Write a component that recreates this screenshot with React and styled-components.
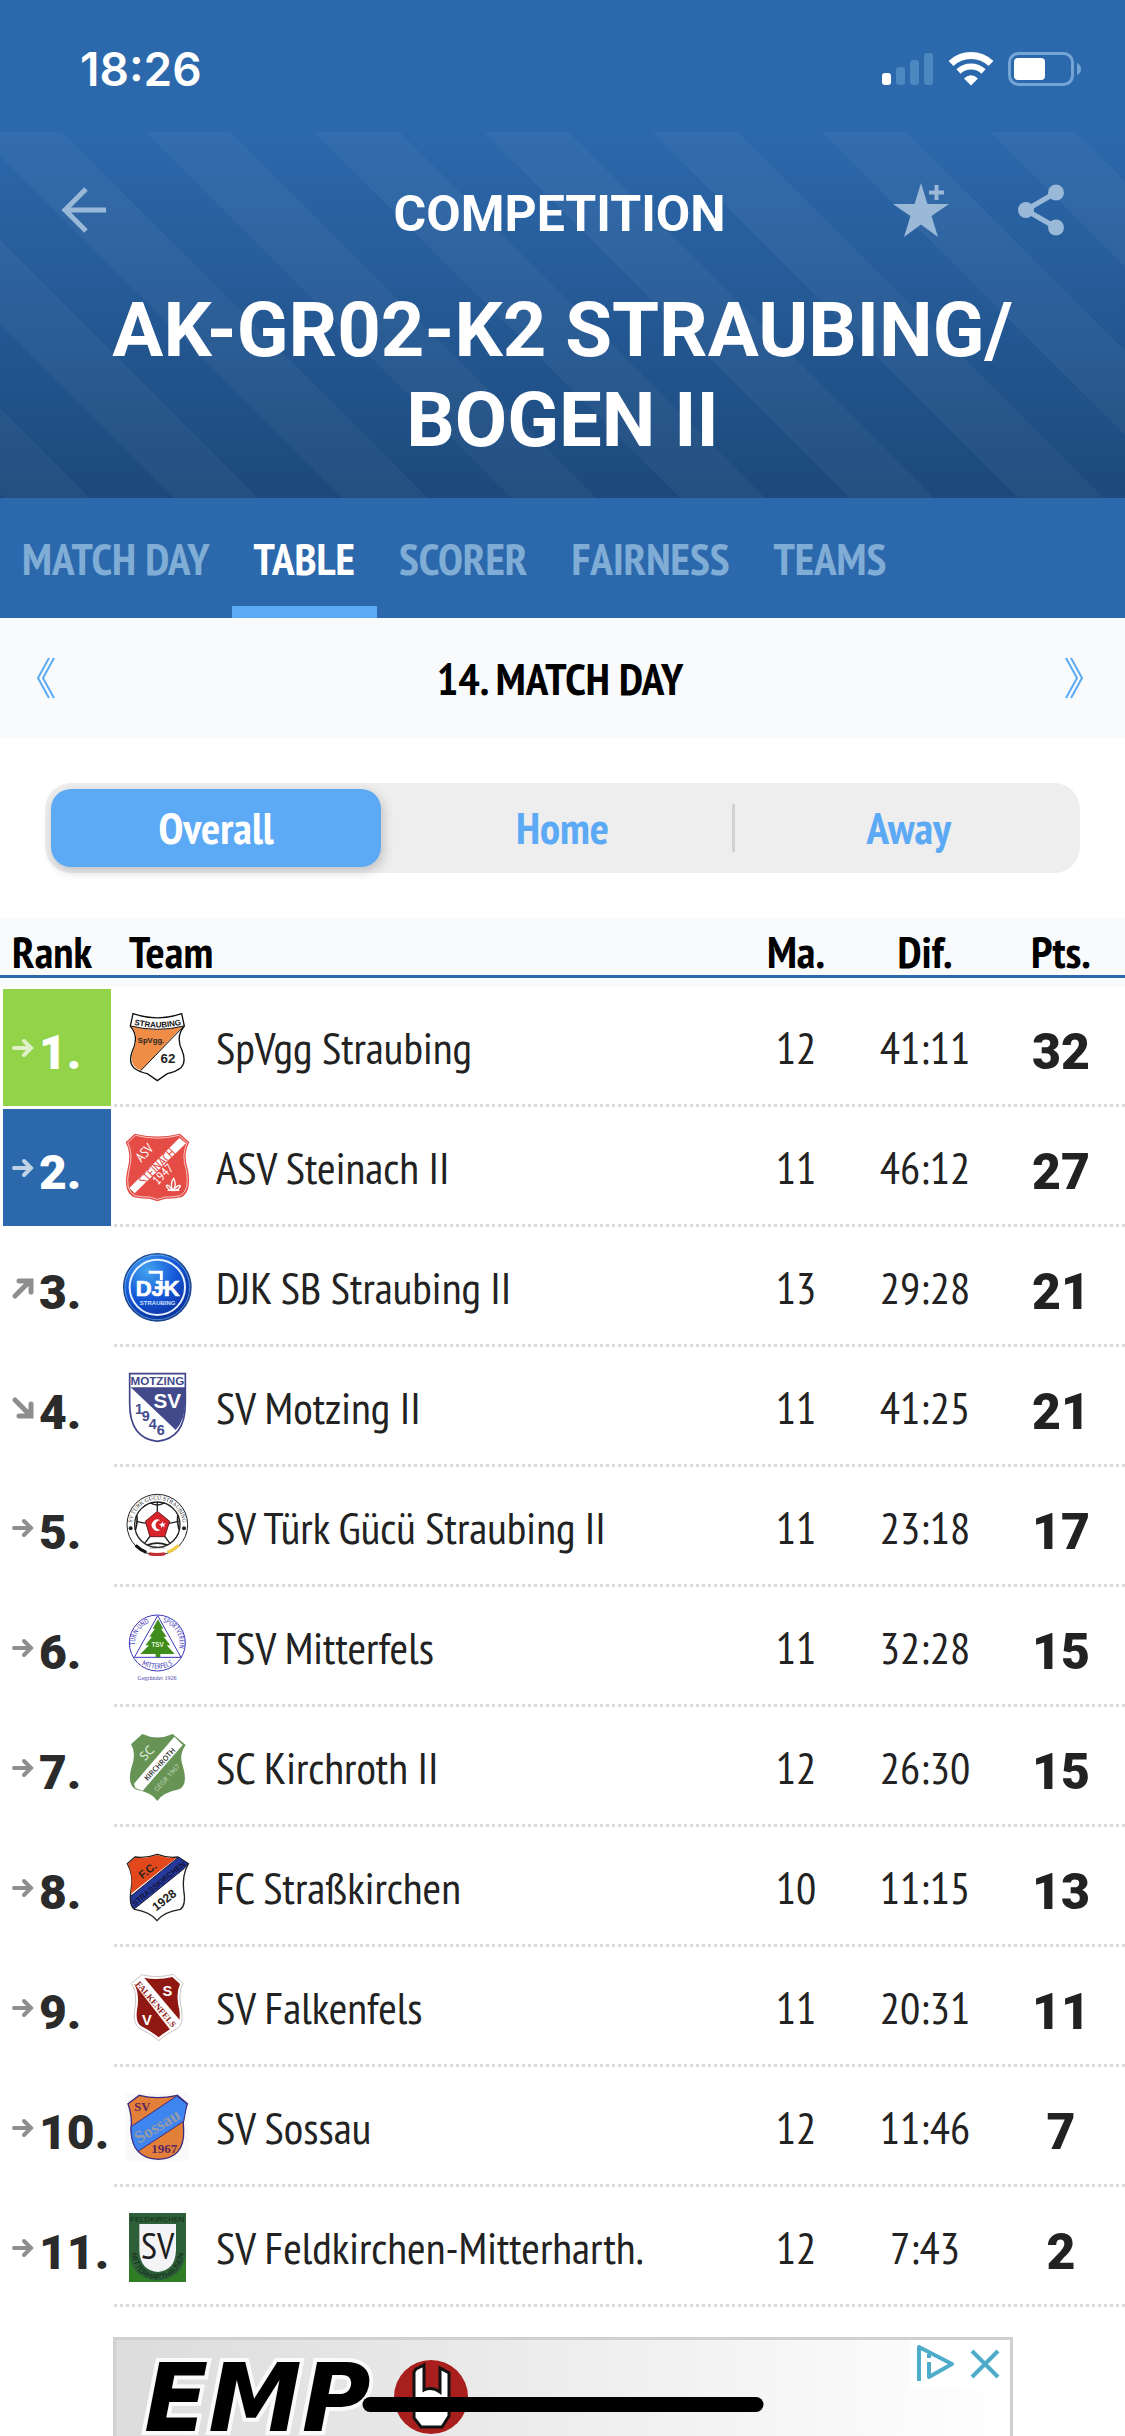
import React, { useState } from 'react';
import styled, { createGlobalStyle, css } from 'styled-components';

const colors = {
  brand: '#2c68ac',
  accent: '#5ca9f5',
  panel: '#f9fafc',
  ink: '#222222',
};

const textFont = `"PT Sans Narrow", "Liberation Sans Narrow", "Roboto Condensed", "Open Sans Condensed", "Noto Sans Condensed", Roboto, sans-serif`;
const displayFont = `Roboto, "Liberation Sans", sans-serif`;

const GlobalStyle = createGlobalStyle`
  *, *::before, *::after { box-sizing: border-box; }
  body { margin: 0; background: #ffffff; color: ${colors.ink}; font-family: ${textFont}; }
  button { border: 0; padding: 0; background: none; font-family: inherit; cursor: pointer; }
  svg { display: block; }
`;

const Page = styled.div`
  display: flex;
  flex-direction: column;
  min-height: 100vh;
`;

const StatusBar = styled.div`
  display: flex;
  align-items: center;
  justify-content: space-between;
  height: 132px;
  padding: 6px 43px 0 80px;
  background: ${colors.brand};
  color: #ffffff;
`;

const Clock = styled.time`
  font: 600 46px/48px Inter, sans-serif;
`;

const StatusIcons = styled.div`
  display: flex;
  align-items: center;
  gap: 14px;
`;

const Hero = styled.header`
  padding-bottom: 33px;
  background:
    linear-gradient(45deg, rgba(255, 255, 255, 0.035) 25%, transparent 25% 50%, rgba(255, 255, 255, 0.035) 50% 75%, transparent 75%) 5px 100% / 169px 169px,
    linear-gradient(#2c68ac, #1c497b);
  color: #ffffff;
`;

const Toolbar = styled.div`
  display: grid;
  grid-template-columns: 1fr auto 1fr;
  align-items: center;
  height: 153px;
  padding: 2px 52px 0;
`;

const ToolbarTitle = styled.p`
  margin: 0;
  padding: 8px 6px 0 0;
  font: 700 50px/56px ${displayFont};
`;

const ToolbarActions = styled.div`
  display: flex;
  justify-content: flex-end;
  gap: 56px;
`;

const IconButton = styled.button`
  display: flex;
  align-items: center;
  justify-content: center;
  width: 64px;
  height: 64px;
  color: #9ab9d8;
`;

const Title = styled.h1`
  margin: 0 auto;
  max-width: 960px;
  font: 700 76px/90px ${displayFont};
  text-align: center;
`;

const Tabs = styled.nav`
  display: flex;
  height: 120px;
  background: ${colors.brand};
`;

const Tab = styled.button`
  padding: 12px 22px 0;
  border-bottom: 12px solid ${(p) => (p.$active ? colors.accent : 'transparent')};
  color: ${(p) => (p.$active ? '#ffffff' : '#80add6')};
  font-weight: 700;
  font-size: 45px;
`;

const DayBar = styled.div`
  display: flex;
  align-items: center;
  justify-content: space-between;
  height: 120px;
  padding: 0 23px 0 18px;
  background: ${colors.panel};
`;

const DayButton = styled(IconButton)`
  width: 56px;
  color: ${colors.accent};
`;

const DayTitle = styled.h2`
  margin: 0;
  color: #000000;
  font-weight: 700;
  font-size: 45px;
`;

const Segments = styled.div`
  display: grid;
  grid-template-columns: repeat(3, 1fr);
  gap: 16px;
  height: 90px;
  margin: 45px;
  padding: 6px;
  border-radius: 26px;
  background: #eeeeee;
`;

const Segment = styled.button`
  position: relative;
  padding-bottom: 2px;
  border-radius: 20px;
  color: ${colors.accent};
  font-weight: 700;
  font-size: 45px;
  ${(p) =>
    p.$active &&
    css`
      background: ${colors.accent};
      color: #ffffff;
      box-shadow: 2px 4px 12px rgba(0, 0, 0, 0.2);
    `}
  ${(p) =>
    p.$divided &&
    css`
      &::before {
        content: '';
        position: absolute;
        left: -12px;
        top: 15px;
        bottom: 15px;
        width: 3px;
        background: #d2d2d4;
      }
    `}
`;

const Standings = styled.table`
  width: 100%;
  table-layout: fixed;
  border-spacing: 0;
`;

const HeadCell = styled.th`
  height: 69px;
  width: ${(p) => p.$width || 'auto'};
  padding: 0 0 3px ${(p) => p.$inset || '0'};
  border-bottom: 9px solid ${colors.panel};
  box-shadow: inset 0 -3px ${colors.brand};
  background: ${colors.panel};
  color: #000000;
  font-weight: 700;
  font-size: 45px;
  line-height: 48px;
  text-align: ${(p) => p.$align || 'center'};
  vertical-align: bottom;
`;

const Row = styled.tr`
  height: 120px;
  background: repeating-linear-gradient(90deg, #dadada 0 3px, transparent 3px 6px) 114px 100% / 100% 3px no-repeat;
`;

const Cell = styled.td`
  padding: 0;
  font-size: 45px;
  text-align: center;
`;

const RankBox = styled.div`
  display: flex;
  align-items: center;
  gap: 4px;
  height: 117px;
  margin: 1px 3px 0;
  padding-left: 8px;
  background: ${(p) => p.$fill || 'transparent'};
  color: ${(p) => (p.$fill ? '#ffffff' : '#2b2b2b')};
`;

const TrendIcon = styled.svg`
  flex: none;
  opacity: ${(p) => (p.$light ? 0.7 : 0.55)};
`;

const RankNumber = styled.span`
  padding-top: 10px;
  font: 900 48px/56px ${displayFont};
`;

const Team = styled.div`
  display: flex;
  align-items: center;
  gap: 23px;
  padding-left: 7px;
  text-align: left;
  white-space: nowrap;
`;

const Points = styled(Cell)`
  padding-top: 10px;
  font: 900 50px/56px ${displayFont};
`;

const Ad = styled.aside`
  flex: 1;
  min-height: 99px;
  margin: 30px 112px 0 113px;
  border: 3px solid #d0d0d0;
  border-bottom: 0;
  background: linear-gradient(90deg, #dcdcdc, #ffffff);
`;

const AdRow = styled.div`
  display: flex;
  justify-content: space-between;
  align-items: flex-start;
`;

const AdControls = styled.div`
  display: flex;
  align-items: center;
  background: #ffffff;
`;

const AdButton = styled.button`
  display: flex;
  align-items: center;
  justify-content: center;
  width: 50px;
  height: 48px;
`;

const HomeIndicator = styled.div`
  position: fixed;
  bottom: 24px;
  left: 50%;
  width: 401px;
  height: 15px;
  border-radius: 8px;
  background: #000000;
  transform: translateX(-50%);
`;

const trendPaths = {
  same: 'M3 12H20M13 5L20 12L13 19',
  up: 'M4 20L19 5M8 5H20V16',
  down: 'M4 4L19 19M20 8V20H8',
};

function Trend({ kind, light }) {
  return (
    <TrendIcon $light={light} width="24" height="24" viewBox="0 0 24 24" fill="none" stroke={light ? '#fff' : '#333'} strokeWidth={kind === 'same' ? 4 : 5} strokeLinecap="round" role="img" aria-label={kind}>
      <path d={trendPaths[kind]} />
    </TrendIcon>
  );
}

const bold = 'Liberation Sans, sans-serif';

const crests = {
  spvgg: (
    <>
      <path d="M69 41Q142 66 215 41L223 78Q196 110 216 151Q230 185 213 203Q196 216 172 221L142 242L112 221Q88 216 71 203Q54 185 68 151Q88 110 61 78Z" fill="#fff" stroke="#111" strokeWidth="4" />
      <path d="M64 79Q142 98 218 79L94 211Q55 200 69 153Q90 112 64 79Z" fill="#ef8c45" />
      <path d="M62 78Q142 98 222 78M220 80L92 212" fill="none" stroke="#111" strokeWidth="3" />
      <path id="arc-spvgg" d="M68 73Q142 92 218 73" fill="none" />
      <text fontFamily={bold} fontWeight="700" fontSize="24" fill="#111" textAnchor="middle"><textPath href="#arc-spvgg" startOffset="50%">STRAUBING</textPath></text>
      <text x="123" y="130" fontFamily={bold} fontWeight="700" fontSize="23" fill="#222" textAnchor="middle">SpVgg.</text>
      <text x="174" y="190" fontFamily={bold} fontWeight="700" fontSize="40" fill="#222" textAnchor="middle">62</text>
    </>
  ),
  steinach: (
    <>
      <path d="M74 41Q142 58 210 41L238 67Q218 100 234 150Q246 215 214 232Q190 237 166 236L142 244L118 236Q94 237 72 232Q38 215 52 150Q66 100 47 67Z" fill="#e54c45" />
      <path d="M77 46Q142 63 207 46L232 68Q213 102 229 151Q240 211 211 227Q188 232 165 231L142 238L119 231Q96 232 75 227Q43 211 57 151Q71 102 53 68Z" fill="none" stroke="#fff" strokeWidth="2" />
      <path d="M58 204L208 54L228 70L74 220Z" fill="#fff" />
      <g fontFamily={textFont} fontWeight="400" textAnchor="middle">
        <text transform="translate(113 108) rotate(-46)" fontSize="41" fill="#fff">ASV</text>
        <text transform="translate(151 149) rotate(-45)" fontSize="39" fill="#e54c45">STEINACH</text>
        <text transform="translate(168 172) rotate(-45)" fontSize="39" fill="#fff">1947</text>
      </g>
      <path d="M188 212Q179 190 191 175Q202 195 188 212Q205 192 211 198Q207 211 188 212Q174 189 169 198Q175 210 188 212M173 211H208" fill="none" stroke="#fff" strokeWidth="4" />
    </>
  ),
  djk: (
    <>
      <defs>
        <radialGradient id="djk-fill" cx="0.35" cy="0.25" r="0.85">
          <stop offset="0" stopColor="#43a4ef" />
          <stop offset="0.5" stopColor="#1557d8" />
          <stop offset="1" stopColor="#07288f" />
        </radialGradient>
      </defs>
      <circle cx="142" cy="142" r="101" fill="url(#djk-fill)" stroke="#1c458c" strokeWidth="4" />
      <circle cx="142" cy="142" r="97" fill="none" stroke="#7fbbe6" strokeWidth="2" />
      <circle cx="142" cy="142" r="83" fill="none" stroke="#e4effc" strokeWidth="6" />
      <text x="143" y="168" fontFamily={bold} fontWeight="700" fontSize="66" fill="#fff" stroke="#fff" strokeWidth="2" textAnchor="middle">DJK</text>
      <path d="M116 97H154V120M134 143H175" fill="none" stroke="#fff" strokeWidth="9" />
      <text x="143" y="194" fontFamily={bold} fontWeight="700" fontSize="18" fill="#cfe2fb" textAnchor="middle">STRAUBING</text>
    </>
  ),
  motzing: (
    <>
      <path d="M59 41H226V130Q226 236 142 244Q59 236 59 130Z" fill="#fff" stroke="#3f4589" strokeWidth="5" />
      <path d="M60 82H225V130Q225 180 197 210L62 82Z" fill="#424a8c" />
      <g fontFamily={bold} fontWeight="700" fill="#424a8c" textAnchor="middle">
        <text x="142" y="76" fontSize="35">MOTZING</text>
        <text x="172" y="144" fontSize="62" fill="#fff">SV</text>
        <text x="87" y="163" fontSize="43">1</text>
        <text x="107" y="184" fontSize="43">9</text>
        <text x="128" y="206" fontSize="43">4</text>
        <text x="152" y="226" fontSize="43">6</text>
      </g>
    </>
  ),
  turk: (
    <>
      <circle cx="142" cy="134" r="91" fill="#fff" stroke="#222" strokeWidth="3" />
      <circle cx="142" cy="134" r="68" fill="none" stroke="#222" strokeWidth="4" />
      <path d="M142 66V94M78 124L107 130M206 124L177 130M104 190L123 165M180 190L161 165" stroke="#222" strokeWidth="4" />
      <path d="M120 68Q142 82 164 68M80 105Q84 125 76 150M204 105Q200 125 208 150M112 195Q142 184 172 195" fill="none" stroke="#222" strokeWidth="5" />
      <path d="M142 94L179 124L164 170H120L106 124Z" fill="#d8232a" stroke="#6d1a1d" strokeWidth="3" />
      <path d="M151 121A17 17 0 1 0 151 150A14 14 0 1 1 151 121Z" fill="#fff" />
      <path d="M157 124L160 131L167 130L162 136L165 142L158 139L153 144L153 137L147 133L154 131Z" fill="#fff" />
      <path id="arc-turk" d="M68 152A76 76 0 1 1 216 152" fill="none" />
      <text fontFamily="Liberation Serif, serif" fontSize="17" fill="#222" textAnchor="middle"><textPath href="#arc-turk" startOffset="50%">SV TÜRK GÜCÜ STRAUBING</textPath></text>
      <text x="142" y="206" fontFamily="Liberation Serif, serif" fontSize="13" fill="#444" textAnchor="middle">1981 e.V.</text>
      <g fill="#222">
        <circle cx="62" cy="145" r="6" />
        <circle cx="222" cy="145" r="6" />
      </g>
      <path d="M77 196Q91 210 109 217" fill="none" stroke="#111" strokeWidth="9" />
      <path d="M117 221Q141 226 165 221" fill="none" stroke="#c22f33" strokeWidth="9" />
      <path d="M172 217Q191 210 206 196" fill="none" stroke="#f0cd45" strokeWidth="9" />
    </>
  ),
  mitterfels: (
    <>
      <circle cx="142" cy="129" r="84" fill="#fff" stroke="#3b36b8" strokeWidth="3" />
      <path d="M143 47L213 172H73Z" fill="none" stroke="#3b36b8" strokeWidth="3" />
      <path d="M144 58L160 86H153L170 110H161L181 136H170L194 162H151V172H137V162H91L117 136H106L126 110H118L135 86H128Z" fill="#3f8c1c" />
      <text x="143" y="142" fontFamily={bold} fontWeight="700" fontSize="19" fill="#e8f5df" textAnchor="middle">TSV</text>
      <path id="arc-mit-l" d="M78 150A66 66 0 0 1 132 65" fill="none" />
      <path id="arc-mit-r" d="M153 65A66 66 0 0 1 206 150" fill="none" />
      <path id="arc-mit-b" d="M88 190Q142 222 196 190" fill="none" />
      <g fontFamily={textFont} fontWeight="400" fill="#3b36b8" textAnchor="middle">
        <text fontSize="22"><textPath href="#arc-mit-l" startOffset="50%">TURN-UND</textPath></text>
        <text fontSize="21"><textPath href="#arc-mit-r" startOffset="50%">SPORTVEREIN</textPath></text>
        <text fontSize="22"><textPath href="#arc-mit-b" startOffset="50%">MITTERFELS</textPath></text>
      </g>
      <text x="141" y="239" fontFamily="Liberation Serif, serif" fontSize="18" fill="#4a48a8" textAnchor="middle">Gegründet 1926</text>
    </>
  ),
  kirchroth: (
    <>
      <path d="M97 42Q142 63 188 42L227 75Q205 105 219 140Q235 195 207 208Q158 218 142 243Q126 218 76 208Q50 190 65 140Q80 100 63 73Z" fill="#679455" />
      <path d="M72 191L193 50L218 75L98 212L76 204Z" fill="#fff" />
      <g fontFamily="Open Sans, sans-serif" textAnchor="middle">
        <text transform="translate(120 108) rotate(-47)" fontSize="37" fill="#eef5ea">SC</text>
        <text transform="translate(155 138) rotate(-47)" fontSize="22" fontWeight="600" fill="#2a2a2a">KIRCHROTH</text>
        <text transform="translate(176 178) rotate(-47)" fontSize="20" fill="#c9dcc0">GEGR 1967</text>
      </g>
    </>
  ),
  strass: (
    <>
      <path d="M75 51Q110 55 142 43Q174 55 202 51L235 71Q216 105 221 150Q229 196 211 208Q160 216 141 242Q122 216 74 208Q56 196 63 150Q72 105 52 71Z" fill="#fff" stroke="#222" strokeWidth="4" />
      <path d="M75 53Q110 57 142 45Q174 57 200 53L62 162Q72 105 54 71Z" fill="#e2481c" />
      <path d="M63 168L206 51L235 71L222 86L74 206Q58 195 63 168Z" fill="#25399d" stroke="#1b1b2e" strokeWidth="3" />
      <g fontFamily={bold} fontWeight="700" textAnchor="middle" fill="#222">
        <text transform="translate(120 100) rotate(-38)" fontSize="33">F.C.</text>
        <text transform="translate(151 137) rotate(-39)" fontSize="23" fill="#141438">STRASSKIRCHEN</text>
        <text transform="translate(170 190) rotate(-38)" fontSize="36">1928</text>
      </g>
    </>
  ),
  falkenfels: (
    <>
      <path d="M96 44Q142 56 190 43L219 70Q203 100 215 150Q221 192 203 205Q170 220 146 242Q122 220 88 205Q68 192 74 150Q84 100 64 70Z" fill="#fff" stroke="#b5a5a5" strokeWidth="2" />
      <path d="M101 53Q142 62 187 51L210 72Q196 103 208 150Q213 187 198 198Q168 213 146 232Q122 213 93 198Q76 187 81 150Q90 103 73 72Z" fill="#8f1812" />
      <path d="M72 70L100 50L214 186L184 214Z" fill="#fff" />
      <text transform="translate(131 138) rotate(50)" fontFamily="Liberation Serif, serif" fontWeight="700" fontSize="26" fill="#8f1812" textAnchor="middle">FALKENFELS</text>
      <g fontFamily={bold} fontWeight="700" fontSize="44" fill="#fff" textAnchor="middle">
        <text x="172" y="107">S</text>
        <text x="111" y="196">V</text>
      </g>
    </>
  ),
  sossau: (
    <>
      <path d="M45 40H238V242H45Z" fill="#f8f9f8" />
      <path d="M88 46Q142 60 202 46L232 71Q216 110 221 150Q224 236 145 238Q66 236 63 150Q68 110 54 71Z" fill="#e27f39" stroke="#3d2a80" strokeWidth="4" />
      <path d="M63 140L200 48L231 72L221 124L84 214Q62 190 63 140Z" fill="#3f85f0" stroke="#3d2a80" strokeWidth="3" />
      <g fontFamily="Liberation Serif, serif" fontWeight="700" textAnchor="middle">
        <text x="97" y="94" fontSize="38" fill="#5a2560">SV</text>
        <text transform="translate(150 153) rotate(-31)" fontSize="52" fill="#969aa6">Sossau</text>
        <text x="163" y="218" fontSize="39" fill="#5a2560">1967</text>
      </g>
    </>
  ),
  feldkirchen: (
    <>
      <path d="M57 39H228V246H57Z" fill="#2f7d25" />
      <path d="M57 39H228V150Q226 234 142 242Q58 234 57 150Z" fill="#2d5f38" />
      <path d="M88 72H198V150Q196 212 143 216Q90 212 88 150Z" fill="#f4f4f6" />
      <text x="143" y="178" fontFamily={textFont} fontSize="112" fill="#1d1d1d" textAnchor="middle">SV</text>
      <text x="142" y="66" fontFamily={bold} fontSize="23" fill="#142b18" textAnchor="middle">FELDKIRCHEN</text>
      <path id="arc-feld" d="M64 98V150Q70 234 142 238Q214 234 222 150V98" fill="none" />
      <text fontFamily={bold} fontSize="23" fill="#142b18" textAnchor="middle"><textPath href="#arc-feld" startOffset="50%">MITTERHARTHAUSEN</textPath></text>
    </>
  ),
};

const rows = [
  { rank: 1, trend: 'same', fill: '#93d349', crest: 'spvgg', team: 'SpVgg Straubing', played: 12, diff: '41:11', points: 32 },
  { rank: 2, trend: 'same', fill: colors.brand, crest: 'steinach', team: 'ASV Steinach II', played: 11, diff: '46:12', points: 27 },
  { rank: 3, trend: 'up', crest: 'djk', team: 'DJK SB Straubing II', played: 13, diff: '29:28', points: 21 },
  { rank: 4, trend: 'down', crest: 'motzing', team: 'SV Motzing II', played: 11, diff: '41:25', points: 21 },
  { rank: 5, trend: 'same', crest: 'turk', team: 'SV Türk Gücü Straubing II', played: 11, diff: '23:18', points: 17 },
  { rank: 6, trend: 'same', crest: 'mitterfels', team: 'TSV Mitterfels', played: 11, diff: '32:28', points: 15 },
  { rank: 7, trend: 'same', crest: 'kirchroth', team: 'SC Kirchroth II', played: 12, diff: '26:30', points: 15 },
  { rank: 8, trend: 'same', crest: 'strass', team: 'FC Straßkirchen', played: 10, diff: '11:15', points: 13 },
  { rank: 9, trend: 'same', crest: 'falkenfels', team: 'SV Falkenfels', played: 11, diff: '20:31', points: 11 },
  { rank: 10, trend: 'same', crest: 'sossau', team: 'SV Sossau', played: 12, diff: '11:46', points: 7 },
  { rank: 11, trend: 'same', crest: 'feldkirchen', team: 'SV Feldkirchen-Mitterharth.', played: 12, diff: '7:43', points: 2 },
];

const tabNames = ['MATCH DAY', 'TABLE', 'SCORER', 'FAIRNESS', 'TEAMS'];
const segmentNames = ['Overall', 'Home', 'Away'];

export default function App() {
  const [tab, setTab] = useState('TABLE');
  const [segment, setSegment] = useState('Overall');

  return (
    <Page>
      <GlobalStyle />
      <StatusBar>
        <Clock>18:26</Clock>
        <StatusIcons>
          <svg width="52" height="34" viewBox="0 0 52 34" aria-hidden="true">
            <rect x="0" y="21" width="9" height="12" rx="3" fill="#fff" />
            <g fill="#4b88bf">
              <rect x="14" y="15" width="9" height="18" rx="3" />
              <rect x="28" y="8" width="9" height="25" rx="3" />
              <rect x="42" y="1" width="9" height="32" rx="3" />
            </g>
          </svg>
          <svg width="46" height="34" viewBox="0 0 46 34" fill="none" stroke="#fff" aria-hidden="true">
            <path d="M3 11.500A29 29 0 0 1 43 11.500" strokeWidth="7" />
            <path d="M10.500 19.500A18 18 0 0 1 35.500 19.500" strokeWidth="6" />
            <path d="M16 26.500Q23 20 30 26.500L23 33.500Z" fill="#fff" stroke="none" />
          </svg>
          <svg width="74" height="34" viewBox="0 0 74 34" aria-hidden="true">
            <rect x="1.500" y="1.500" width="63" height="31" rx="9" fill="none" stroke="#74a5d5" strokeWidth="3" />
            <rect x="6" y="6" width="31" height="22" rx="4" fill="#fff" />
            <path d="M69 11Q73 13 73 17Q73 21 69 23Z" fill="#74a5d5" />
          </svg>
        </StatusIcons>
      </StatusBar>

      <Hero>
        <Toolbar>
          <IconButton aria-label="Back">
            <svg width="48" height="48" viewBox="0 0 48 48" fill="none" stroke="currentColor" strokeWidth="5">
              <path d="M46 24H4M26 3L5 24L26 45" />
            </svg>
          </IconButton>
          <ToolbarTitle>COMPETITION</ToolbarTitle>
          <ToolbarActions>
            <IconButton aria-label="Add to favourites">
              <svg width="56" height="56" viewBox="0 0 56 56" fill="currentColor">
                <path d="M28 1L34.500 22H56L38.500 34L45 55L28 42.500L11 55L17.500 34L0 22H21.500Z" />
                <path d="M43.500 3V18M36 10.500H51" stroke="currentColor" strokeWidth="4" />
              </svg>
            </IconButton>
            <IconButton aria-label="Share">
              <svg width="48" height="52" viewBox="0 0 48 52" fill="currentColor">
                <path d="M9 26L39 8.500M9 26L39 43.500" stroke="currentColor" strokeWidth="5" />
                <circle cx="9" cy="26" r="8" />
                <circle cx="39" cy="8.500" r="8" />
                <circle cx="39" cy="43.500" r="8" />
              </svg>
            </IconButton>
          </ToolbarActions>
        </Toolbar>
        <Title>AK-GR02-K2 STRAUBING/ BOGEN II</Title>
      </Hero>

      <Tabs>
        {tabNames.map((name) => (
          <Tab key={name} $active={name === tab} onClick={() => setTab(name)}>{name}</Tab>
        ))}
      </Tabs>

      <DayBar>
        <DayButton aria-label="Previous match day">
          <svg width="20" height="42" viewBox="0 0 20 42" fill="none" stroke="currentColor" strokeWidth="2">
            <path d="M13 1L2 21L13 41M18 1L7 21L18 41" />
          </svg>
        </DayButton>
        <DayTitle>14. MATCH DAY</DayTitle>
        <DayButton aria-label="Next match day">
          <svg width="20" height="42" viewBox="0 0 20 42" fill="none" stroke="currentColor" strokeWidth="2">
            <path d="M2 1L13 21L2 41M7 1L18 21L7 41" />
          </svg>
        </DayButton>
      </DayBar>

      <Segments role="group" aria-label="Matches counted">
        {segmentNames.map((name, i) => (
          <Segment
            key={name}
            $active={name === segment}
            $divided={i > 0 && segment !== name && segment !== segmentNames[i - 1]}
            aria-pressed={name === segment}
            onClick={() => setSegment(name)}
          >
            {name}
          </Segment>
        ))}
      </Segments>

      <Standings>
        <thead>
          <tr>
            <HeadCell $width="114px" $align="left" $inset="12px">Rank</HeadCell>
            <HeadCell $align="left" $inset="15px">Team</HeadCell>
            <HeadCell $width="114px">Ma.</HeadCell>
            <HeadCell $width="144px">Dif.</HeadCell>
            <HeadCell $width="128px">Pts.</HeadCell>
          </tr>
        </thead>
        <tbody>
          {rows.map((r) => (
            <Row key={r.rank}>
              <Cell>
                <RankBox $fill={r.fill}>
                  <Trend kind={r.trend} light={Boolean(r.fill)} />
                  <RankNumber>{r.rank}.</RankNumber>
                </RankBox>
              </Cell>
              <Cell>
                <Team>
                  <svg width="72" height="72" viewBox="33 33 216 216" aria-hidden="true">{crests[r.crest]}</svg>
                  {r.team}
                </Team>
              </Cell>
              <Cell>{r.played}</Cell>
              <Cell>{r.diff}</Cell>
              <Points>{r.points}</Points>
            </Row>
          ))}
        </tbody>
      </Standings>

      <Ad aria-label="Advertisement">
        <AdRow>
          <svg width="400" height="96" viewBox="0 0 400 96" role="img" aria-label="EMP">
            <text x="28" y="91" fontFamily="DejaVu Sans, sans-serif" fontWeight="700" fontStyle="italic" fontSize="94" fill="#000" stroke="#fafafa" strokeWidth="8" paintOrder="stroke">EMP</text>
            <circle cx="315" cy="57" r="37" fill="#a81f1d" />
            <path d="M300 29L308 25V50Q316 46 324 52V28L333 33V76L326 87H305L298 78V32Z" fill="#fff" stroke="#111" strokeWidth="3" />
          </svg>
          <AdControls>
            <AdButton aria-label="About this ad">
              <svg width="40" height="40" viewBox="0 0 40 40" fill="none" stroke="#4fabca" strokeWidth="4" strokeLinejoin="round">
                <path d="M4 37V3L37 20L14 33V18M14 10V14" />
              </svg>
            </AdButton>
            <AdButton aria-label="Close ad">
              <svg width="30" height="30" viewBox="0 0 30 30" stroke="#4fabca" strokeWidth="4">
                <path d="M2 2L28 28M28 2L2 28" />
              </svg>
            </AdButton>
          </AdControls>
        </AdRow>
      </Ad>
      <HomeIndicator />
    </Page>
  );
}
